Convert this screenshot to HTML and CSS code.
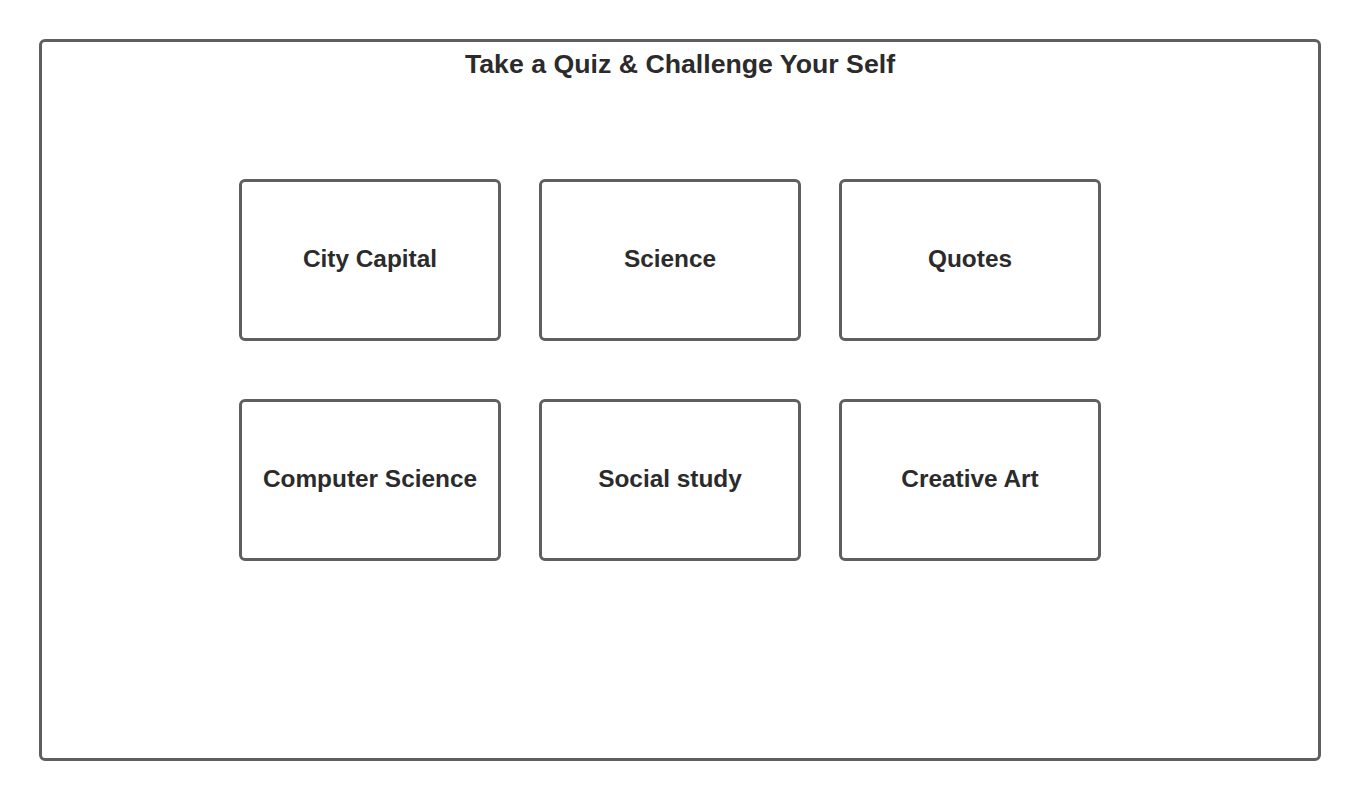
FILE: index.html
```html
<!DOCTYPE html>
<html lang="en">
<head>
<meta charset="utf-8">
<title>Take a Quiz</title>
<link rel="stylesheet" href="styles.css">
</head>
<body>
<main class="frame">
  <h1 class="title">Take a Quiz &amp; Challenge Your Self</h1>
  <div class="grid">
    <div class="card">City Capital</div>
    <div class="card">Science</div>
    <div class="card">Quotes</div>
    <div class="card">Computer Science</div>
    <div class="card">Social study</div>
    <div class="card">Creative Art</div>
  </div>
</main>
</body>
</html>
```
FILE: styles.css
```css
html, body {
  margin: 0;
  padding: 0;
  background: #ffffff;
}
body {
  font-family: "Liberation Sans", Arial, sans-serif;
  color: #2b2b2b;
}
.frame {
  box-sizing: border-box;
  margin: 39px 0 0 39px;
  width: 1282px;
  height: 722px;
  border: 3px solid #5f5f5f;
  border-radius: 6px;
  padding-top: 7px;
}
.title {
  margin: 0;
  font-size: 26.7px;
  line-height: 30px;
  font-weight: bold;
  text-align: center;
}
.grid {
  display: grid;
  grid-template-columns: repeat(3, 262px);
  grid-auto-rows: 162px;
  column-gap: 38px;
  row-gap: 58px;
  margin: 100px 0 0 197px;
}
.card {
  box-sizing: border-box;
  border: 3px solid #5f5f5f;
  border-radius: 6px;
  padding-bottom: 2px;
  display: flex;
  align-items: center;
  justify-content: center;
  font-size: 24.4px;
  font-weight: bold;
}
```
